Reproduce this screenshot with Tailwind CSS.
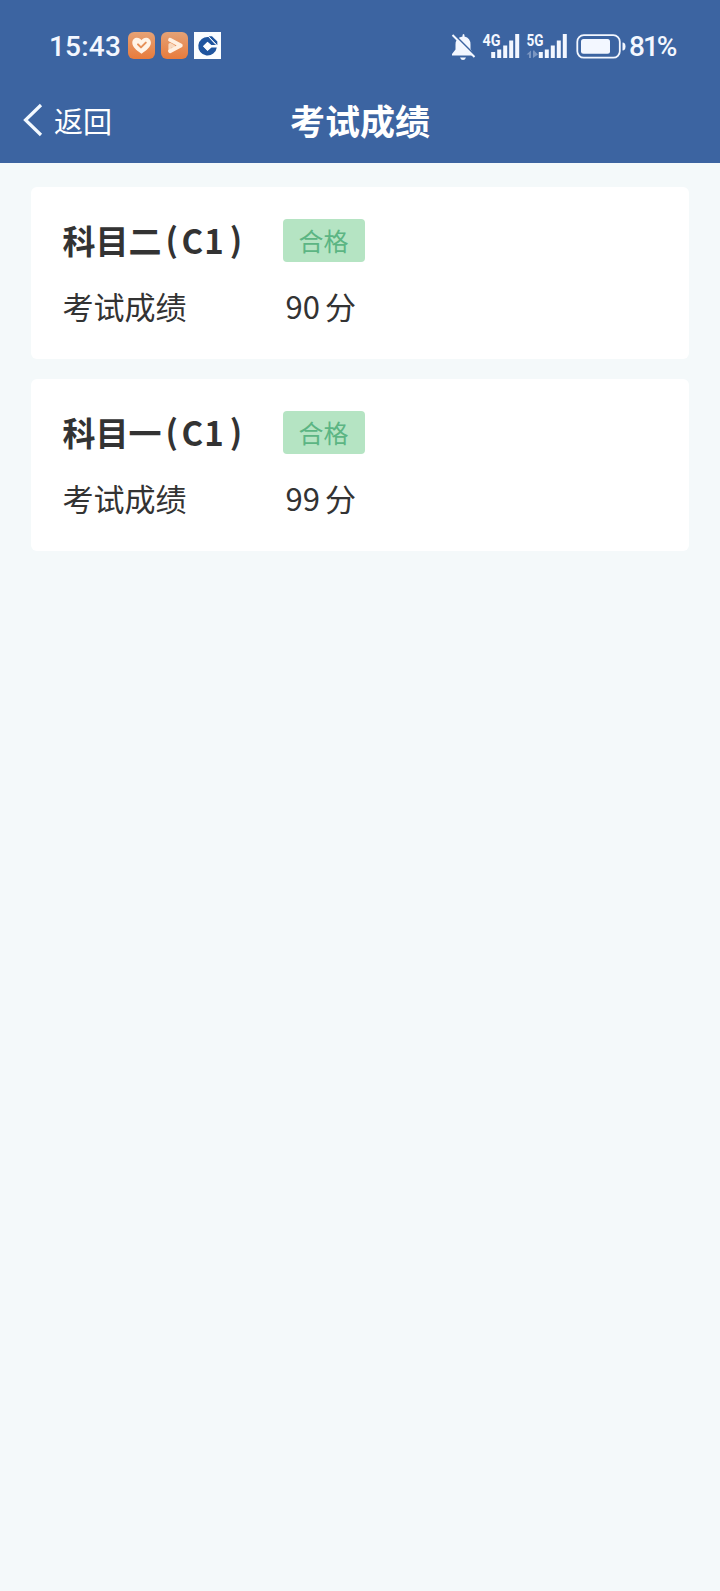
<!DOCTYPE html>
<html lang="zh-CN">
<head>
    <meta charset="UTF-8">
    <meta name="viewport" content="width=device-width, initial-scale=1.0">
    <title>考试成绩</title>
    <script src="https://cdn.jsdelivr.net/npm/@tailwindcss/browser@4"></script>
</head>
<body class="bg-[#f4f9fa] text-[#333333] font-['Noto_Sans_CJK_SC',sans-serif] min-h-screen">
    <header class="bg-[#3c64a1] text-white h-[163px]">
        <!-- status bar -->
        <div class="flex items-center justify-between h-[76px] pt-[15px] pl-[49px] pr-[44px] text-[#f3f7ff]">
            <div class="flex items-center">
                <span class="w-[79px] pt-[2px] font-[Roboto,sans-serif] text-[28px] leading-[30px] font-medium tracking-[0.2px] whitespace-nowrap">15:43</span>
                <svg class="w-[27px] h-[27px]" viewBox="0 0 27 27">
                    <defs>
                        <linearGradient id="orange" x1="0" y1="0" x2="0" y2="1">
                            <stop offset="0" stop-color="#e5a276" />
                            <stop offset="1" stop-color="#e87b3c" />
                        </linearGradient>
                    </defs>
                    <rect width="27" height="27" rx="6" fill="url(#orange)" />
                    <path d="M13.5 21.8C8 18 4.3 14.7 4.3 10.8C4.3 7.8 6.4 5.8 9 5.8C11 5.8 12.6 6.7 13.5 8.2C14.4 6.7 16 5.8 18 5.8C20.6 5.8 22.9 7.8 22.9 10.8C22.9 14.7 19 18 13.5 21.8Z" fill="#fff4e8" />
                    <path d="M10 12.4L13 15.4L17.8 10.6" fill="none" stroke="#e69058" stroke-width="2" stroke-linecap="round" stroke-linejoin="round" />
                </svg>
                <svg class="w-[27px] h-[27px] ml-[6px]" viewBox="0 0 27 27">
                    <rect width="27" height="27" rx="6" fill="url(#orange)" />
                    <path d="M9 19V12.5L12.5 14.5" fill="none" stroke="#f8d9c0" stroke-width="3.2" stroke-linecap="round" stroke-linejoin="round" />
                    <path d="M9 7.8L19.8 13.5L9 19.2" fill="none" stroke="#fff0e2" stroke-width="3.8" stroke-linecap="round" stroke-linejoin="round" />
                </svg>
                <svg class="w-[27px] h-[27px] ml-[6px]" viewBox="0 0 27 27">
                    <rect width="27" height="27" fill="#fbfdff" />
                    <path d="M14.5 5A9.3 9.3 0 1 0 22.8 15.5H17.5L13.5 19L9 14.3L13.5 9.8L17.3 13H21.5Z" fill="#1f559f" />
                    <path d="M13.5 10L17.8 14.3L13.5 18.6L9.2 14.3Z" fill="#fbfdff" />
                    <path d="M14.8 4.3H18L23.3 9.6V13H22Z" fill="#1f559f" />
                    <path d="M15.2 5.2L22.8 12.8" stroke="#fbfdff" stroke-width="0.9" />
                </svg>
            </div>
            <div class="flex items-center">
                <svg class="w-[179px] h-[40px]" viewBox="450 25 179 40" fill="#f3f7ff">
                    <!-- muted bell -->
                    <path d="M462.5 35.5V34.5Q462.5 33 463.5 33T464.5 34.5V35.5Q470.5 37 470.5 43.5V48L473.5 53V54.5H452V53L455.5 48.5V43.5Q455.5 37 462.5 35.5Z" />
                    <path d="M460 56.5H466Q465 59 463 59T460 56.5Z" />
                    <path d="M454 33.5L475.5 55" stroke="#3c64a1" stroke-width="2" />
                    <path d="M452.5 34L474.5 56" stroke="#f3f7ff" stroke-width="2" />
                    <!-- 4G signal -->
                    <text x="482.5" y="45.3" class="font-[Roboto,sans-serif]" font-size="16" font-weight="700" textLength="18" lengthAdjust="spacingAndGlyphs">4G</text>
                    <path d="M491.2 51H495.2V57H491.2ZM497.2 48.5H501.2V57H497.2ZM503.2 44.5H507.2V57H503.2ZM509.2 39.5H513.2V57H509.2ZM515.2 33H519.2V57H515.2Z" />
                    <!-- 5G signal -->
                    <text x="526.5" y="45.3" class="font-[Roboto,sans-serif]" font-size="16" font-weight="700" textLength="17" lengthAdjust="spacingAndGlyphs">5G</text>
                    <path d="M526.5 53.5L531 49.5V57H529V53.5ZM533 49.5H534.5V50L538 53.5L533 57Z" opacity=".35" />
                    <path d="M538.8 51H542.8V57H538.8ZM544.8 48.5H548.8V57H544.8ZM550.8 44.5H554.8V57H550.8ZM556.8 39.5H560.8V57H556.8ZM562.8 33H566.8V57H562.8Z" />
                    <!-- battery -->
                    <rect x="577.3" y="34.2" width="42.5" height="22.5" rx="6.5" fill="none" stroke="#f3f7ff" stroke-width="1.8" />
                    <rect x="581" y="38" width="29" height="14.8" rx="2.5" />
                    <path d="M622.5 41.5Q625.5 41.5 625.5 45.5T622.5 49.5Z" />
                </svg>
                <span class="w-[47px] pt-[2px] font-[Roboto,sans-serif] text-[28px] leading-[30px] font-medium tracking-[-2px] whitespace-nowrap">81%</span>
            </div>
        </div>
        <!-- nav bar -->
        <nav class="grid grid-cols-3 items-center h-[87px]">
            <a href="#" class="flex items-center pl-[23px] text-[29px] leading-[40px]">
                <svg class="w-[20px] h-[34px] mt-px mr-[11px]" viewBox="0 0 20 34" fill="none" stroke="#f3f9ff" stroke-width="3.2">
                    <path d="M18 2L2.5 17L18 32" />
                </svg>
                返回
            </a>
            <h1 class="text-center text-[35px] leading-[48px] font-bold">考试成绩</h1>
        </nav>
    </header>

    <main class="flex flex-col gap-[20px] px-[31px] pt-[23.5px]">
        <section class="bg-white rounded-[6px] h-[172px] pt-[32px] pl-[31.5px]">
            <div class="flex items-center h-[43px]">
                <h2 class="flex w-[220px] text-[33px] leading-[43px] font-bold whitespace-nowrap"><span>科目二</span><span class="w-[20px] pl-[4px] -mt-[2px]">(</span><span class="tracking-[1px]">C1</span><span class="pl-[5px] -mt-[2px]">)</span></h2>
                <span class="w-[82px] h-[43px] rounded-[4px] bg-[#b5e4c3] text-[#5cb583] text-[25px] leading-[43px] text-center">合格</span>
            </div>
            <div class="flex mt-[22px] text-[31px] leading-[43px]">
                <span class="w-[223px]">考试成绩</span>
                <span class="mr-[5px]">90</span>
                <span>分</span>
            </div>
        </section>

        <section class="bg-white rounded-[6px] h-[172px] pt-[32px] pl-[31.5px]">
            <div class="flex items-center h-[43px]">
                <h2 class="flex w-[220px] text-[33px] leading-[43px] font-bold whitespace-nowrap"><span>科目一</span><span class="w-[20px] pl-[4px] -mt-[2px]">(</span><span class="tracking-[1px]">C1</span><span class="pl-[5px] -mt-[2px]">)</span></h2>
                <span class="w-[82px] h-[43px] rounded-[4px] bg-[#b5e4c3] text-[#5cb583] text-[25px] leading-[43px] text-center">合格</span>
            </div>
            <div class="flex mt-[22px] text-[31px] leading-[43px]">
                <span class="w-[223px]">考试成绩</span>
                <span class="mr-[5px]">99</span>
                <span>分</span>
            </div>
        </section>
    </main>
</body>
</html>
